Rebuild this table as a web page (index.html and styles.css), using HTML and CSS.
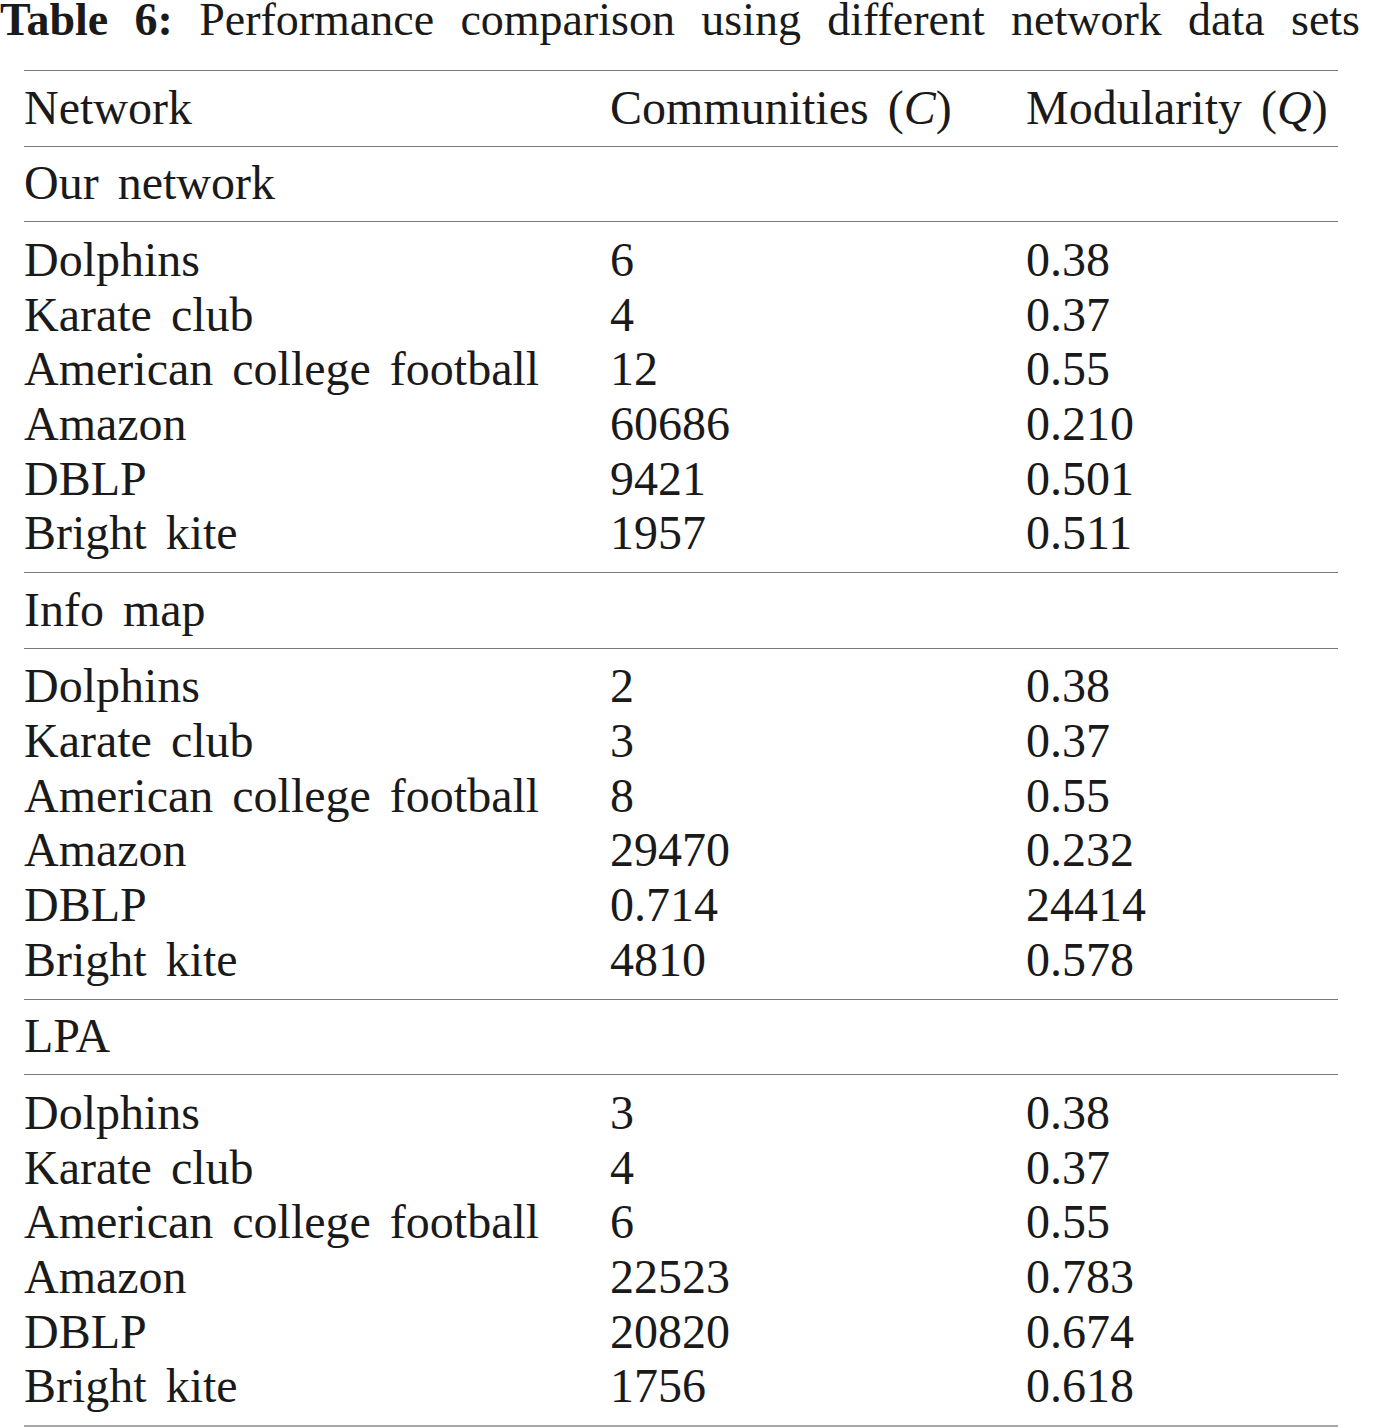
FILE: index.html
```html
<!DOCTYPE html>
<html lang="en">
<head>
<meta charset="utf-8">
<title>Table 6</title>
<link rel="stylesheet" href="styles.css">
</head>
<body>
<div class="page">
  <div class="caption"><b>Table 6:</b> Performance comparison using different network data sets</div>
  <div class="table">
    <div class="row head">
      <div>Network</div><div>Communities (<i>C</i>)</div><div>Modularity (<i>Q</i>)</div>
    </div>
    <div class="row section"><div>Our network</div></div>
    <div class="group">
      <div class="row"><div>Dolphins</div><div>6</div><div>0.38</div></div>
      <div class="row"><div>Karate club</div><div>4</div><div>0.37</div></div>
      <div class="row"><div>American college football</div><div>12</div><div>0.55</div></div>
      <div class="row"><div>Amazon</div><div>60686</div><div>0.210</div></div>
      <div class="row"><div>DBLP</div><div>9421</div><div>0.501</div></div>
      <div class="row"><div>Bright kite</div><div>1957</div><div>0.511</div></div>
    </div>
    <div class="row section"><div>Info map</div></div>
    <div class="group">
      <div class="row"><div>Dolphins</div><div>2</div><div>0.38</div></div>
      <div class="row"><div>Karate club</div><div>3</div><div>0.37</div></div>
      <div class="row"><div>American college football</div><div>8</div><div>0.55</div></div>
      <div class="row"><div>Amazon</div><div>29470</div><div>0.232</div></div>
      <div class="row"><div>DBLP</div><div>0.714</div><div>24414</div></div>
      <div class="row"><div>Bright kite</div><div>4810</div><div>0.578</div></div>
    </div>
    <div class="row section"><div>LPA</div></div>
    <div class="group">
      <div class="row"><div>Dolphins</div><div>3</div><div>0.38</div></div>
      <div class="row"><div>Karate club</div><div>4</div><div>0.37</div></div>
      <div class="row"><div>American college football</div><div>6</div><div>0.55</div></div>
      <div class="row"><div>Amazon</div><div>22523</div><div>0.783</div></div>
      <div class="row"><div>DBLP</div><div>20820</div><div>0.674</div></div>
      <div class="row"><div>Bright kite</div><div>1756</div><div>0.618</div></div>
    </div>
  </div>
</div>
</body>
</html>
```
FILE: styles.css
```css
html, body {
  margin: 0;
  padding: 0;
  background: #ffffff;
}
body {
  font-family: "Liberation Serif", "Times New Roman", serif;
  color: #1a1a1a;
}
.page {
  width: 1381px;
}
.caption {
  width: 1360px;
  font-size: 46px;
  line-height: 39px;
  height: 39px;
  text-align: justify;
  text-align-last: justify;
}
.caption b {
  font-weight: bold;
}
.table {
  margin: 31px 0 0 24px;
  width: 1314px;
  border-top: 1px solid #7a7a7a;
  border-bottom: 2px solid #a8a8a8;
}
.row {
  display: grid;
  grid-template-columns: 586px 416px 1fr;
  font-size: 48px;
  line-height: 54.7px;
  word-spacing: 7px;
  white-space: nowrap;
}
.head, .section {
  padding: 9.5px 0 10.3px;
  border-bottom: 1px solid #7a7a7a;
}
.group {
  padding: 10.8px 0 11px;
  border-bottom: 1px solid #7a7a7a;
}
.group:last-child {
  border-bottom: none;
}
.row i {
  font-style: italic;
}
```
